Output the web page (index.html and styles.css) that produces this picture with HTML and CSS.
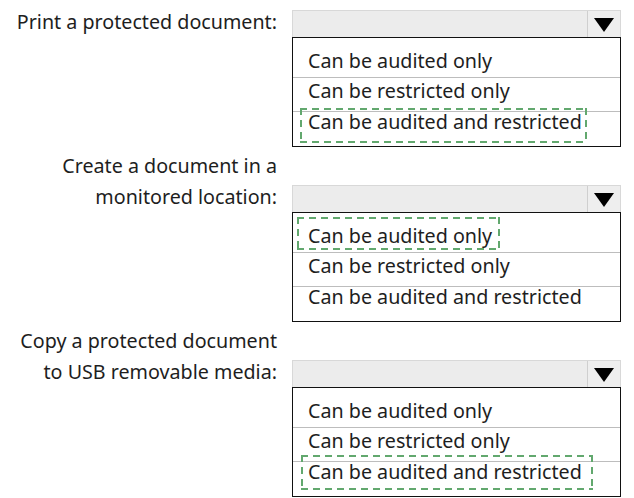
FILE: index.html
```html
<!DOCTYPE html>
<html lang="en">
<head>
    <meta charset="UTF-8">
    <title>Protected document actions</title>
    <link rel="stylesheet" href="styles.css">
</head>
<body>
    <!-- Print -->
    <div class="question">
        <div class="label">Print a protected document:</div>
        <div class="select">
            <div class="arrow"><span class="triangle"></span></div>
        </div>
        <ul class="options">
            <li>Can be audited only</li>
            <li>Can be restricted only</li>
            <li><span class="answer first">Can be audited and restricted</span></li>
        </ul>
    </div>

    <!-- Create -->
    <div class="question">
        <div class="label">Create a document in a<br>monitored location:</div>
        <div class="select">
            <div class="arrow"><span class="triangle"></span></div>
        </div>
        <ul class="options">
            <li><span class="answer second">Can be audited only</span></li>
            <li>Can be restricted only</li>
            <li>Can be audited and restricted</li>
        </ul>
    </div>

    <!-- Copy to USB -->
    <div class="question">
        <div class="label">Copy a protected document<br>to USB removable media:</div>
        <div class="select">
            <div class="arrow"><span class="triangle"></span></div>
        </div>
        <ul class="options">
            <li>Can be audited only</li>
            <li>Can be restricted only</li>
            <li><span class="answer third">Can be audited and restricted</span></li>
        </ul>
    </div>
</body>
</html>
```

FILE: styles.css
```css
body {
    margin: 0;
    padding: 6px 0 0 0;
    background: #fff;
    color: #1e1e1e;
    font-family: "Noto Sans", "Open Sans", sans-serif;
    font-size: 19.7px;
    line-height: 31px;
}

.question {
    display: grid;
    grid-template-columns: 277px 329px;
    column-gap: 15px;
    margin-bottom: 3px;
}

.label {
    grid-row: 1;
    grid-column: 1;
    text-align: right;
    align-self: end;
    white-space: nowrap;
}

.select {
    grid-row: 1;
    grid-column: 2;
    align-self: end;
    height: 27px;
    box-sizing: border-box;
    background: #ececec;
    border: 1px solid #d8d8d8;
    border-bottom: none;
    display: flex;
    justify-content: flex-end;
}

.arrow {
    width: 32px;
    border-left: 1px solid #cfcfcf;
    background: #eeeeee;
    display: flex;
    justify-content: center;
    align-items: center;
}

.triangle {
    width: 0;
    height: 0;
    border-left: 10px solid transparent;
    border-right: 10px solid transparent;
    border-top: 14px solid #000;
    margin-top: 2px;
}

.options {
    grid-row: 2;
    grid-column: 2;
    list-style: none;
    margin: 0;
    padding: 0;
    border: 1px solid #111;
}

.options li {
    padding-left: 15px;
}

/* rows are not evenly split: text keeps a 31px rhythm, lines do not */
.options li:nth-child(1) {
    padding-top: 7px;
    padding-bottom: 1px;
    line-height: 31px;
}

.options li:nth-child(2) {
    border-top: 1px solid #bdbdbd;
    line-height: 25px;
    padding-bottom: 8px;
}

.options li:nth-child(3) {
    border-top: 1px solid #bdbdbd;
    line-height: 19px;
    padding-bottom: 15px;
}

/* dashed box round the chosen answer; inline padding and backgrounds take no room */
.answer {
    background:
        repeating-linear-gradient(90deg, #62a86e 0 7px, transparent 7px 12px) left top / 100% 2px no-repeat,
        repeating-linear-gradient(90deg, #62a86e 0 7px, transparent 7px 12px) left bottom / 100% 2px no-repeat,
        repeating-linear-gradient(180deg, #62a86e 0 7px, transparent 7px 12px) left top / 2px 100% no-repeat,
        repeating-linear-gradient(180deg, #62a86e 0 7px, transparent 7px 12px) right top / 2px 100% no-repeat;
}

.answer.first {
    margin-left: -8px;
    padding: 0 5px 8px 8px;
}

.answer.second {
    margin-left: -11px;
    padding: 5px 8px 1px 11px;
}

.answer.third {
    margin-left: -7px;
    padding: 3px 11px 5px 7px;
}
```
